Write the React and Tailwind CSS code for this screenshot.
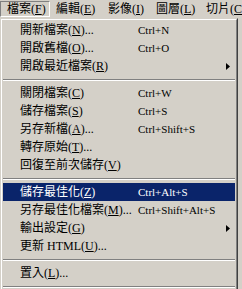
import React from "react";

const items = [
  { label: "開新檔案", k: "N", dots: true, sc: "Ctrl+N" },
  { label: "開啟舊檔", k: "O", dots: true, sc: "Ctrl+O" },
  { label: "開啟最近檔案", k: "R", arrow: true },
  "sep",
  { label: "關閉檔案", k: "C", sc: "Ctrl+W" },
  { label: "儲存檔案", k: "S", sc: "Ctrl+S" },
  { label: "另存新檔", k: "A", dots: true, sc: "Ctrl+Shift+S" },
  { label: "轉存原始", k: "T", dots: true },
  { label: "回復至前次儲存", k: "V" },
  "sep",
  { label: "儲存最佳化", k: "Z", sc: "Ctrl+Alt+S", active: true },
  { label: "另存最佳化檔案", k: "M", dots: true, sc: "Ctrl+Shift+Alt+S" },
  { label: "輸出設定", k: "G", arrow: true },
  { label: "更新 HTML", k: "U", dots: true },
  "sep",
  { label: "置入", k: "L", dots: true },
  "sep",
];

const bar = [
  { label: "檔案", k: "F", w: "w-[50px]", pressed: true },
  { label: "編輯", k: "E", w: "w-[52px]" },
  { label: "影像", k: "I", w: "w-[48px]" },
  { label: "圖層", k: "L", w: "w-[50px]" },
  { label: "切片", k: "C", w: "w-[60px]" },
];

function Arrow() {
  return (
    <svg width="4" height="7" viewBox="0 0 4 7" className="block">
      <path d="M0 0 L4 3.5 L0 7 Z" fill="#000" />
    </svg>
  );
}

export default function App() {
  return (
    <div className="w-[242px] h-[289px] overflow-hidden bg-[#d4d0c8] text-black text-[12px] leading-none font-['Liberation_Serif','Noto_Sans_CJK_TC',serif]">
      <div className="h-[18px] flex items-start pt-[1px] whitespace-nowrap">
        {bar.map((b, i) => (
          <div
            key={i}
            className={
              "h-[16px] flex items-center shrink-0 " +
              b.w +
              (b.pressed
                ? " border-t border-l border-b border-r border-t-[#808080] border-l-[#808080] border-b-white border-r-white pl-[6px]"
                : " pl-[6px]")
            }
          >
            {b.label}(<u>{b.k}</u>)
          </div>
        ))}
      </div>
      <div className="w-[238px] border border-t-[#d4d0c8] border-l-[#d4d0c8] border-r-[#404040] border-b-[#404040]">
        <div className="border border-t-white border-l-white border-r-[#808080] border-b-[#808080] p-[1px]">
          {items.map((it, i) =>
            it === "sep" ? (
              <div key={i} className="h-[9px] flex flex-col justify-center">
                <div className="h-[1px] bg-[#808080]" />
                <div className="h-[1px] bg-white" />
              </div>
            ) : (
              <div
                key={i}
                className={
                  "h-[18px] flex items-center whitespace-nowrap " +
                  (it.active ? "bg-[#0a246a] text-white" : "")
                }
              >
                <div className="w-[118px] ml-[17px] shrink-0">
                  {it.label}(<u>{it.k}</u>){it.dots ? "..." : ""}
                </div>
                {it.sc ? <div className="text-[11px]">{it.sc}</div> : null}
                {it.arrow ? (
                  <div className="ml-auto mr-[5px]">
                    <Arrow />
                  </div>
                ) : null}
              </div>
            )
          )}
        </div>
      </div>
    </div>
  );
}
